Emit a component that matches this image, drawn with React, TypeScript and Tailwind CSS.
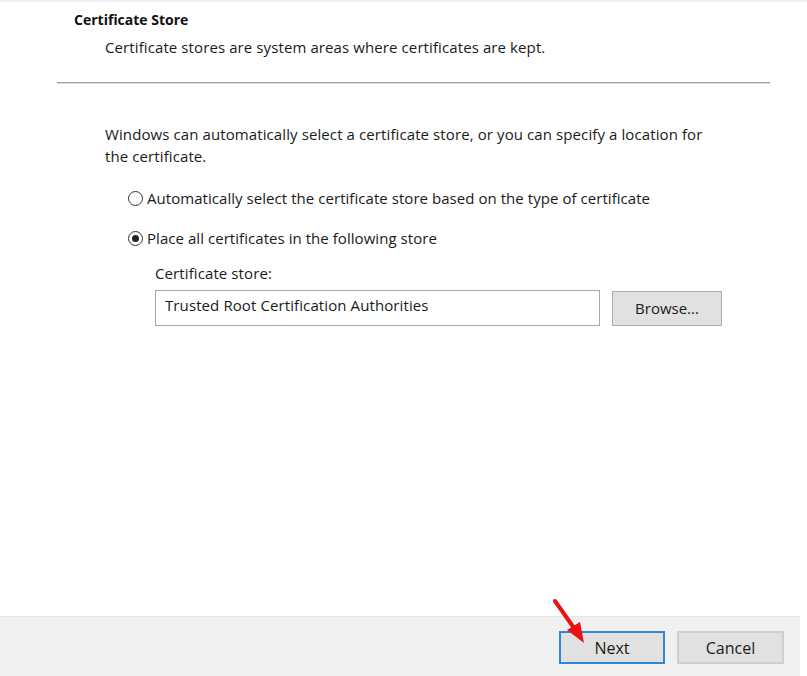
import React from 'react';

const font = { fontFamily: '"Open Sans", "Noto Sans", "Liberation Sans", sans-serif' };

function Radio({ checked, label }: { checked?: boolean; label: string }) {
  return (
    <div className="flex items-center h-[22px]">
      <span className="w-[15px] h-[15px] rounded-full border border-[#333333] bg-white flex items-center justify-center">
        {checked && <span className="w-[7px] h-[7px] rounded-full bg-[#222222]" />}
      </span>
      <span className="ml-[4px] text-[15px] text-[#1a1a1a] tracking-[0.05px]">{label}</span>
    </div>
  );
}

function Button({ label, primary }: { label: string; primary?: boolean }) {
  return (
    <button
      className={
        'h-[33px] bg-[#e1e1e1] text-[16px] text-[#1a1a1a] ' +
        (primary ? 'w-[106px] border-2 border-[#2f86d6]' : 'w-[107px] border-2 border-[#cfcfcf]')
      }
    >
      {label}
    </button>
  );
}

export default function App() {
  return (
    <div className="relative w-[807px] h-[676px] bg-white overflow-hidden flex flex-col" style={font}>
      <div className="h-[2px] bg-[#eef4f7]" />

      {/* Header */}
      <div className="pl-[74px] pt-[9px]">
        <p className="text-[14px] font-bold text-[#111111] leading-[18px]">Certificate Store</p>
        <p className="pl-[31px] mt-[7px] text-[15px] text-[#1a1a1a] leading-[22px] tracking-[0.1px]">
          Certificate stores are system areas where certificates are kept.
        </p>
      </div>

      <div className="ml-[57px] w-[713px] mt-[24px] h-[2px] bg-[#a0a0a0] border-b border-[#dcdcdc]" />

      {/* Body */}
      <div className="pl-[105px] pt-[39px]">
        <p className="w-[610px] text-[15px] text-[#1a1a1a] leading-[22px] tracking-[0.1px]">
          Windows can automatically select a certificate store, or you can specify a location for the certificate.
        </p>
        <div className="pl-[23px] mt-[20px] flex flex-col gap-[18px]">
          <Radio label="Automatically select the certificate store based on the type of certificate" />
          <Radio checked label="Place all certificates in the following store" />
        </div>
        <div className="pl-[50px] mt-[13px]">
          <p className="text-[15px] text-[#1a1a1a] leading-[22px] tracking-[0.1px]">Certificate store:</p>
          <div className="mt-[6px] flex items-center">
            <div className="w-[445px] h-[36px] border border-[#a8a8a8] bg-white pl-[9px] pt-[3px] text-[15px] text-[#1a1a1a] leading-[22px] tracking-[0.1px]">
              Trusted Root Certification Authorities
            </div>
            <button className="ml-[12px] w-[110px] h-[35px] bg-[#e1e1e1] border border-[#adadad] text-[15px] text-[#1a1a1a]">
              Browse...
            </button>
          </div>
        </div>
      </div>

      {/* Footer */}
      <div className="mt-auto w-[800px] h-[60px] bg-[#f0f0f0] border-t border-[#e6e6e6] flex items-start justify-end pr-[16px] pt-[14px] gap-[12px]">
        <Button primary label="Next" />
        <Button label="Cancel" />
      </div>

      {/* Annotation arrow */}
      <svg className="absolute left-0 top-0 pointer-events-none" width="807" height="676">
        <line x1="555" y1="601" x2="574" y2="628" stroke="#ee1111" strokeWidth="4" strokeLinecap="round" />
        <polygon points="584,643 567,630 580,622" fill="#ee1111" />
      </svg>
    </div>
  );
}
